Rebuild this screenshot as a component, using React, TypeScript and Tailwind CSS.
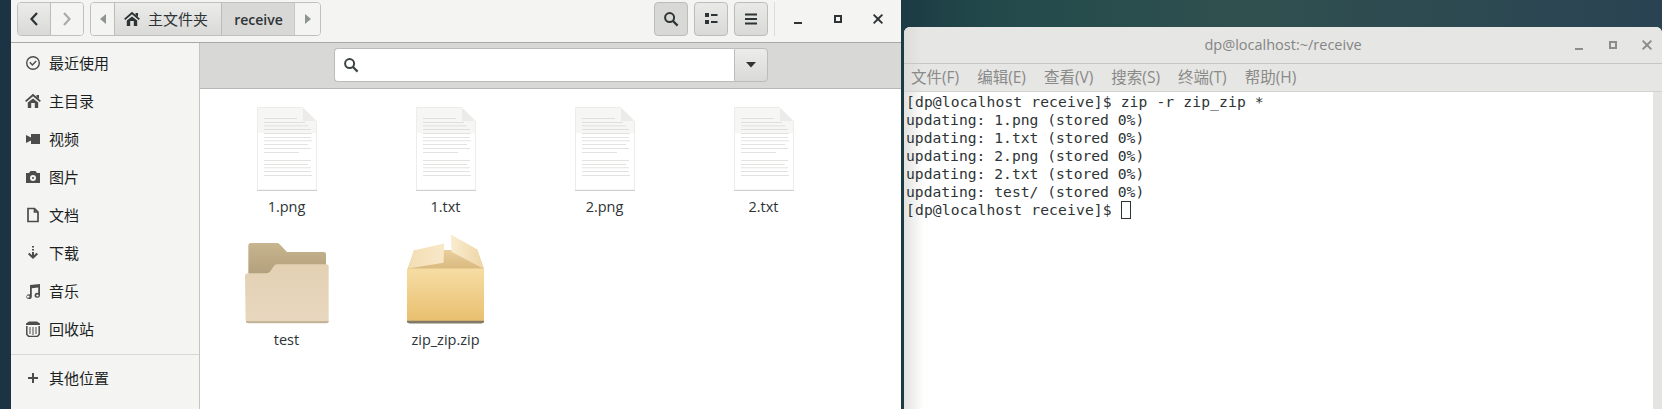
import React from "react";

const sidebarItems: [string, string][] = [
  ["clock", "最近使用"],
  ["home", "主目录"],
  ["video", "视频"],
  ["camera", "图片"],
  ["doc", "文档"],
  ["down", "下载"],
  ["music", "音乐"],
  ["trash", "回收站"],
];

function Glyph({ name, color = "#4c4c4c" }: { name: string; color?: string }) {
  const c = color;
  const inner: Record<string, React.ReactNode> = {
    clock: (
      <>
        <circle cx="8" cy="8" r="6.3" fill="none" stroke={c} strokeWidth="1.4" />
        <path d="M4.8 7.2 7.4 10 11.2 6" fill="none" stroke={c} strokeWidth="1.4" />
      </>
    ),
    home: (
      <>
        <path fill="none" stroke={c} strokeWidth="1.9" d="M.7 8.4 8 2l7.3 6.4" />
        <path fill={c} d="M11.5 2H14V6L11.5 4Z" />
        <path fill={c} d="M8 5.4 13.2 9.6V15H9.8V10H6.2V15H2.8V9.6Z" />
      </>
    ),
    video: <path fill={c} d="M6 3h9v10H6V9.6L1 12V4l5 2.4Z" />,
    camera: <path fillRule="evenodd" fill={c} d="M5.5 2h5L12 4h3v10H1V4h3ZM8 6a3 3 0 1 0 0 6 3 3 0 0 0 0-6Zm0 2a1 1 0 1 1 0 2 1 1 0 0 1 0-2Z" />,
    doc: <path fill="none" stroke={c} strokeWidth="1.7" d="M3 1.5h6.5l3.5 3.5v9.5H3ZM9.5 1.5V5H13" />,
    down: <path fill={c} d="M7 1h2v1.6H7Zm0 3h2v1.6H7Zm0 3h2v3.2l2.6-2.4L13 9.2 8 14 3 9.2l1.4-1.4L7 10.2Z" />,
    music: <path fillRule="evenodd" fill={c} d="M5 2 15 1V12.3a2.7 2.4 0 1 1-1.8-2.2V4.6L6.8 5.3v8.4A2.7 2.4 0 1 1 5 11.4ZM3.2 12.4a1.2 1.1 0 1 0 0 2.4 1.2 1.1 0 0 0 0-2.4Zm9.2-1a1.2 1.1 0 1 0 0 2.2 1.2 1.1 0 0 0 0-2.2Z" />,
    trash: (
      <>
        <path fill={c} d="M4 .5h8l3 2v1.5H1V2.5Z" />
        <path fill="none" stroke={c} strokeWidth="1.5" d="M1.8 5v8.5l2 2h8.4l2-2V5" />
        <path fill="none" stroke={c} strokeWidth="1" d="M5 6v7M8 6v8M11 6v7" />
      </>
    ),
    plus: <path fill={c} d="M7 3h2v4h4v2H9v4H7V9H3V7h4Z" />,
    search: (
      <>
        <circle cx="6.6" cy="6.6" r="4.5" fill="none" stroke={c} strokeWidth="2" />
        <path d="M10 10l4.6 4.6" stroke={c} strokeWidth="2.2" />
      </>
    ),
    list: <path fill={c} d="M2 2h4v4H2Zm6 1h6.5v2H8ZM2 9h4v4H2Zm6 1h6.5v2H8Z" />,
    menu: <path fill={c} d="M2 2.5h12v2H2Zm0 4.5h12v2H2Zm0 4.5h12v2H2Z" />,
    min: <path fill={c} d="M4 11h8v2H4Z" />,
    max: <path fillRule="evenodd" fill={c} d="M4 4h8v8H4Zm2 2v4h4V6Z" />,
    close: <path fill={c} d="M4.2 3 8 6.6 11.8 3 13 4.2 9.4 8 13 11.8 11.8 13 8 9.4 4.2 13 3 11.8 6.6 8 3 4.2Z" />,
  };
  return (
    <svg width="16" height="16" viewBox="0 0 16 16" className="shrink-0">
      {inner[name]}
    </svg>
  );
}

function DocIcon() {
  const rows = [11, 15, 18.5, 22, 26, 30, 33.5, 37, 41, 45, 53, 57, 60.5, 64, 68];
  const widths = [33, 41, 44, 47, 48, 47, 48, 44, 47, 35, 47, 44, 47, 47, 48];
  return (
    <svg width="60" height="85" viewBox="0 0 60 85">
      <path d="M.5.5h45L59.5 14v69H.5Z" fill="#fff" stroke="#ececea" strokeWidth="1" />
      <path d="M1 1h44l14 13v12H1Z" fill="#f6f6f5" />
      <path d="M46 1v13h13Z" fill="#ecebe9" />
      <path d="M0 83.5h60" stroke="#cfcfcd" strokeWidth="1" />
      {rows.map((y, i) => (
        <rect key={y} x="7" y={y} width={widths[i]} height="0.7" fill="#d6d6d4" />
      ))}
    </svg>
  );
}

function FolderIcon() {
  return (
    <svg width="88" height="84" viewBox="66 90 264 252">
      <defs>
        <linearGradient id="fb" x1="0" y1="0" x2="0" y2="1">
          <stop offset="0" stopColor="#c7b58f" />
          <stop offset="1" stopColor="#b3a07c" />
        </linearGradient>
        <linearGradient id="ff" x1="0" y1="0" x2="0" y2="1">
          <stop offset="0" stopColor="#e4d1b4" />
          <stop offset="1" stopColor="#e7d7be" />
        </linearGradient>
      </defs>
      <path d="M82 104q0-8 8-8h78q5 0 8 4l22 23h110q7 0 7 6v60H82Z" fill="url(#fb)" />
      <path d="M72 194q0-6 8-7h56q8 0 12-6l10-15q4-6 10-6h148q7 0 7 6v164q0 6-6 6H81q-6 0-7-6Z" fill="url(#ff)" />
      <path d="M75 330h248v1q0 6-6 6H81q-6 0-6-6Z" fill="#c4b49a" />
    </svg>
  );
}

function BoxIcon() {
  return (
    <svg width="81" height="92" viewBox="552 66 244 276">
      <defs>
        <linearGradient id="bf" x1="0" y1="0" x2="0" y2="1">
          <stop offset="0" stopColor="#f6dda4" />
          <stop offset="1" stopColor="#e9bf6f" />
        </linearGradient>
        <linearGradient id="bi" x1="0" y1="0" x2="0" y2="1">
          <stop offset="0" stopColor="#e9cf9c" />
          <stop offset="1" stopColor="#d9b97f" />
        </linearGradient>
        <linearGradient id="bl" x1="0" y1="0" x2="1" y2="0">
          <stop offset="0" stopColor="#f3deb4" />
          <stop offset="1" stopColor="#f8e8c8" />
        </linearGradient>
        <linearGradient id="br" x1="0" y1="0" x2="1" y2="0">
          <stop offset="0" stopColor="#f9ecd0" />
          <stop offset="1" stopColor="#eed6a6" />
        </linearGradient>
      </defs>
      <path d="M580 117h190l20 57H560Z" fill="url(#bi)" />
      <path d="M558 172h232v160H558Z" fill="url(#bf)" />
      <path d="M558 330h232v5l-8 3H566l-8-3Z" fill="#837967" />
      <path d="M562 172 578 118 670 97 668 155Z" fill="url(#bl)" />
      <path d="M690 70 770 115 788 172 692 122Z" fill="url(#br)" />
    </svg>
  );
}

const files = [
  { name: "1.png", icon: <DocIcon /> },
  { name: "1.txt", icon: <DocIcon /> },
  { name: "2.png", icon: <DocIcon /> },
  { name: "2.txt", icon: <DocIcon /> },
  { name: "test", icon: <FolderIcon /> },
  { name: "zip_zip.zip", icon: <BoxIcon /> },
];

const termLines = [
  "updating: 1.png (stored 0%)",
  "updating: 1.txt (stored 0%)",
  "updating: 2.png (stored 0%)",
  "updating: 2.txt (stored 0%)",
  "updating: test/ (stored 0%)",
];

const menus = ["文件(F)", "编辑(E)", "查看(V)", "搜索(S)", "终端(T)", "帮助(H)"];

const btn =
  "flex h-[34px] w-[34px] items-center justify-center rounded-[4px] border border-[#bcbcb9] bg-[linear-gradient(#e9e9e7,#d9d9d7)]";

export default function App() {
  return (
    <div className="flex h-[409px] w-[1662px] overflow-hidden bg-[linear-gradient(90deg,#1b3342_0%,#1c3a44_54%,#234a4b_60%,#30504f_75%,#2a4353_100%)] pl-[11px] font-['Open_Sans','Noto_Sans_CJK_SC',sans-serif] text-[15px] text-[#2e3436]">
      {/* File manager */}
      <div className="flex h-full w-[890px] flex-col bg-white">
        <header className="flex h-[43px] shrink-0 border-b border-[#a8a8a4] bg-[#f4f4f3] pl-[6px] pt-[2px]">
          <div className="flex h-[34px] w-[67px] overflow-hidden rounded-[4px] border border-[#c0c0bd]">
            <div className="flex w-[33px] items-center justify-center border-r border-[#bcbcb9] bg-[linear-gradient(#ececea,#d9d9d7)]">
              <svg width="12" height="16" viewBox="0 0 12 16"><path d="M9 2 3.5 8 9 14" fill="none" stroke="#2e3436" strokeWidth="2.2" /></svg>
            </div>
            <div className="flex flex-1 items-center justify-center bg-[#f4f4f3]">
              <svg width="12" height="16" viewBox="0 0 12 16"><path d="M3 2 8.5 8 3 14" fill="none" stroke="#a9acab" strokeWidth="2.2" /></svg>
            </div>
          </div>
          <div className="ml-[6px] flex h-[34px] w-[231px] overflow-hidden rounded-[4px] border border-[#c0c0bd]">
            <div className="flex w-[24px] items-center justify-center border-r border-[#bcbcb9] bg-[#f4f4f3]">
              <svg width="8" height="12" viewBox="0 0 8 12"><path d="M7 1v10L1 6Z" fill="#8f9392" /></svg>
            </div>
            <div className="flex w-[107px] items-center border-r border-[#bcbcb9] bg-[linear-gradient(#ececea,#d9d9d7)] pl-[9px]">
              <Glyph name="home" color="#2e3436" />
              <span className="ml-[8px]">主文件夹</span>
            </div>
            <div className="flex w-[73px] items-center justify-center border-r border-[#c8c8c5] bg-[#d8d8d6] pl-[1px] text-[14px] font-semibold">receive</div>
            <div className="flex flex-1 items-center justify-center bg-[#f4f4f3]">
              <svg width="8" height="12" viewBox="0 0 8 12"><path d="M1 1v10l6-5Z" fill="#8f9392" /></svg>
            </div>
          </div>
          <div className="flex-1" />
          <div className="flex h-[34px] w-[34px] items-center justify-center rounded-[4px] border border-[#bcbcb9] bg-[#d8d8d6]"><Glyph name="search" color="#2e3436" /></div>
          <div className={`${btn} ml-[6px]`}><Glyph name="list" color="#2e3436" /></div>
          <div className={`${btn} ml-[6px]`}><Glyph name="menu" color="#2e3436" /></div>
          <div className="ml-[6px] h-[34px] w-px bg-[#dcdcda]" />
          <div className="ml-[15px] flex h-[34px] w-[16px] items-center"><Glyph name="min" color="#2e3436" /></div>
          <div className="ml-[24px] flex h-[34px] w-[16px] items-center"><Glyph name="max" color="#2e3436" /></div>
          <div className="ml-[24px] mr-[15px] flex h-[34px] w-[16px] items-center"><Glyph name="close" color="#2e3436" /></div>
        </header>
        <div className="flex min-h-0 flex-1">
          <aside className="flex w-[189px] shrink-0 flex-col border-r border-[#c4c4c1] bg-[#f4f4f3] pt-[1px]">
            {sidebarItems.map(([icon, label]) => (
              <div key={label} className="flex h-[38px] shrink-0 items-center pl-[14px]">
                <Glyph name={icon} />
                <span className="ml-[8px] text-[#1c1f1f]">{label}</span>
              </div>
            ))}
            <div className="mt-[6px] h-px bg-[#d8d8d6]" />
            <div className="flex h-[46px] items-center pl-[14px]">
              <Glyph name="plus" />
              <span className="ml-[8px] text-[#1c1f1f]">其他位置</span>
            </div>
          </aside>
          <main className="flex min-w-0 flex-1 flex-col">
            <div className="flex h-[46px] shrink-0 items-start border-b border-[#b7b7b4] bg-[#d8d8d6] pl-[134px] pt-[5px]">
              <div className="flex h-[34px] w-[400px] items-center rounded-l-[4px] border border-r-0 border-[#bcbcb9] bg-white pl-[8px]">
                <Glyph name="search" color="#3d4444" />
              </div>
              <div className="flex h-[34px] w-[34px] items-center justify-center rounded-r-[4px] border border-[#bcbcb9] bg-[linear-gradient(#ececea,#d9d9d7)]">
                <svg width="10" height="6" viewBox="0 0 10 6"><path d="M0 0h10L5 5.5Z" fill="#2e3436" /></svg>
              </div>
            </div>
            <div className="grid grid-cols-[repeat(4,159px)] auto-rows-[133px] pl-[7px] pt-[5px]">
              {files.map((f) => (
                <div key={f.name} className="flex flex-col items-center">
                  <div className="flex h-[98px] items-end">{f.icon}</div>
                  <div className="mt-[5px] text-[14.5px] leading-[20px] text-[#2e3436]">{f.name}</div>
                </div>
              ))}
            </div>
          </main>
        </div>
      </div>

      {/* Terminal */}
      <div className="ml-[3px] mt-[27px] flex min-w-0 flex-1 flex-col overflow-hidden rounded-t-[6px] bg-white">
        <div className="flex h-[37px] shrink-0 items-center border-b border-[#c6c6c4] bg-[linear-gradient(90deg,#dcdcda,#e6e6e4_18px)]">
          <div className="flex-1 pl-[91px] text-center text-[14.5px] text-[#858585]">dp@localhost:~/receive</div>
          <div className="flex gap-[18px] pr-[7px]">
            <Glyph name="min" color="#8c8c8a" />
            <Glyph name="max" color="#8c8c8a" />
            <Glyph name="close" color="#8c8c8a" />
          </div>
        </div>
        <div className="flex h-[28px] shrink-0 items-center gap-[18px] border-b border-[#d4d4d2] bg-[linear-gradient(90deg,#dcdcda,#e6e6e4_18px)] pl-[7px] text-[15.5px] text-[#8a8a88]">
          {menus.map((m) => (
            <span key={m}>{m}</span>
          ))}
        </div>
        <div className="flex min-h-0 flex-1">
          <div className="flex-1 bg-[linear-gradient(90deg,#e2e2e0,#ffffff_20px)] pl-[2px] pt-[1px] font-['DejaVu_Sans_Mono','Noto_Sans_CJK_SC',monospace] text-[14.67px] leading-[18px] text-[#2e3436]">
            <div className="h-[18px] whitespace-pre tracking-[0.12px]">[dp@localhost receive]$ zip -r zip_zip *</div>
            {termLines.map((l) => (
              <div key={l} className="h-[18px] whitespace-pre">{l}</div>
            ))}
            <div className="flex h-[18px] whitespace-pre tracking-[0.12px]">
              <span>[dp@localhost receive]$ </span>
              <span className="h-[18px] w-[10px] border border-[#2e3436]" />
            </div>
          </div>
          <div className="w-[9px] shrink-0 bg-[#e4e4e2]" />
        </div>
      </div>
    </div>
  );
}
